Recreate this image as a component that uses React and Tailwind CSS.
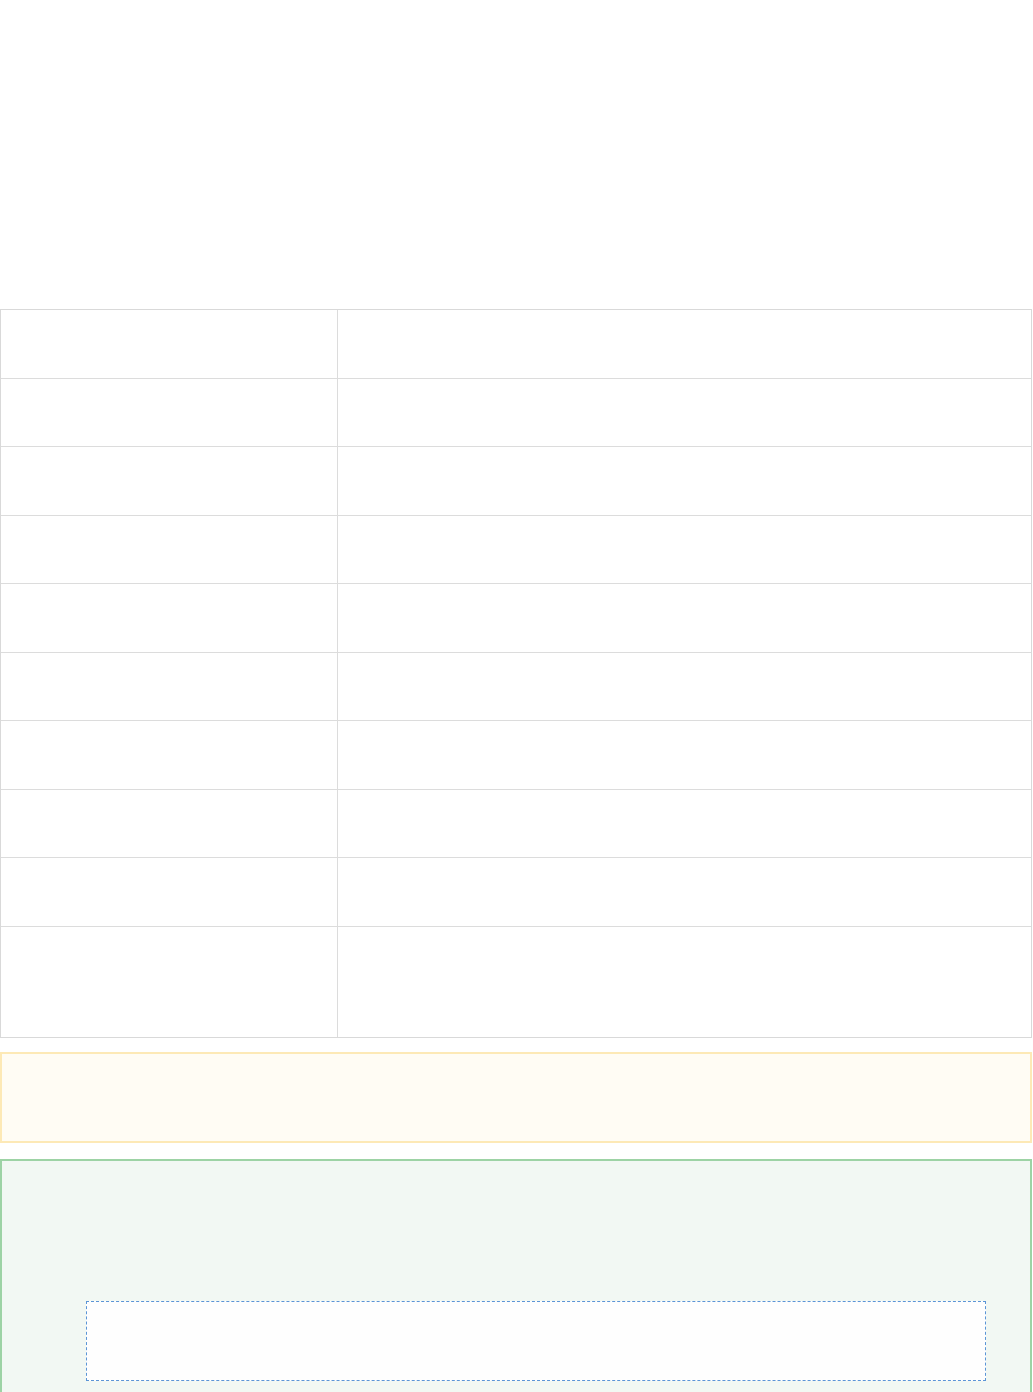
const rows = Array.from({ length: 9 });

export default function App() {
  return (
    <div className="min-h-[1392px] w-[1033px] bg-white font-['Liberation_Sans',sans-serif] text-sm text-white">
      {/* blank header area */}
      <div className="h-[309px]" />

      <div className="w-[1032px] border border-[#d9d9d9]">
        {rows.map((_, i) => (
          <div key={i} className="flex h-[68.5px] border-b border-[#dcdcdc]">
            <div className="w-[337px] border-r border-[#dcdcdc]" />
            <div className="flex-1" />
          </div>
        ))}
        <div className="flex h-[110px]">
          <div className="w-[337px] border-r border-[#dcdcdc]" />
          <div className="flex-1" />
        </div>
      </div>

      {/* note box */}
      <div className="mt-[14px] h-[91px] w-[1032px] border-2 border-[#fde9b6] bg-[#fffcf4]" />

      {/* green panel */}
      <div className="mt-[16px] h-[240px] w-[1032px] border-2 border-b-0 border-[#9dd3a5] bg-[#f2f8f3] pl-[84px] pt-[140px]">
        <div className="h-[80px] w-[900px] border border-dashed border-[#5b95d6] bg-[#fefefe]" />
      </div>
    </div>
  );
}
